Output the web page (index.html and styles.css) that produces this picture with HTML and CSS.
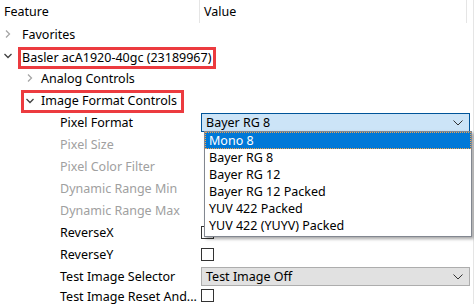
FILE: index.html
```html
<!DOCTYPE html>
<html lang="en">
<head>
    <meta charset="UTF-8">
    <title>Features</title>
    <link rel="stylesheet" href="styles.css">
</head>
<body>
    <div class="tree">
        <!-- header -->
        <div class="head">
            <div class="name">Feature</div>
            <div class="value">Value</div>
        </div>

        <div class="row">
            <div class="name lv0">
                <svg class="arrow closed" width="10" height="10" viewBox="0 0 10 10"><path d="M3 1.5 L6.5 5 L3 8.5" fill="none" stroke="currentColor" stroke-width="1.3"/></svg>
                <span>Favorites</span>
            </div>
            <div class="value"></div>
        </div>
        <div class="row">
            <div class="name lv0">
                <svg class="arrow open" width="10" height="10" viewBox="0 0 10 10"><path d="M1.5 3 L5 6.5 L8.5 3" fill="none" stroke="currentColor" stroke-width="1.3"/></svg>
                <span class="mark cam">Basler acA1920-40gc (23189967)</span>
            </div>
            <div class="value"></div>
        </div>
        <div class="row">
            <div class="name lv1">
                <svg class="arrow closed" width="10" height="10" viewBox="0 0 10 10"><path d="M3 1.5 L6.5 5 L3 8.5" fill="none" stroke="currentColor" stroke-width="1.3"/></svg>
                <span>Analog Controls</span>
            </div>
            <div class="value"></div>
        </div>
        <div class="row">
            <div class="name lv1 marked">
                <span class="mark grp">
                    <svg class="arrow open" width="10" height="10" viewBox="0 0 10 10"><path d="M1.5 3 L5 6.5 L8.5 3" fill="none" stroke="currentColor" stroke-width="1.3"/></svg>
                    <span>Image Format Controls</span>
                </span>
            </div>
            <div class="value"></div>
        </div>
        <div class="row">
            <div class="name lv2">Pixel Format</div>
            <div class="value">
                <div class="select active">
                    <span>Bayer RG 8</span>
                    <svg width="10" height="6" viewBox="0 0 10 6"><path d="M0.5 0.5 L5 5 L9.5 0.5" fill="none" stroke="#333" stroke-width="1"/></svg>
                </div>
            </div>
        </div>
        <div class="row">
            <div class="name lv2 off">Pixel Size</div>
            <div class="value"></div>
        </div>
        <div class="row">
            <div class="name lv2 off">Pixel Color Filter</div>
            <div class="value"></div>
        </div>
        <div class="row">
            <div class="name lv2 off">Dynamic Range Min</div>
            <div class="value"></div>
        </div>
        <div class="row">
            <div class="name lv2 off">Dynamic Range Max</div>
            <div class="value"></div>
        </div>
        <div class="row">
            <div class="name lv2">ReverseX</div>
            <div class="value"><div class="check"></div></div>
        </div>
        <div class="row">
            <div class="name lv2">ReverseY</div>
            <div class="value"><div class="check"></div></div>
        </div>
        <div class="row">
            <div class="name lv2">Test Image Selector</div>
            <div class="value">
                <div class="select">
                    <span>Test Image Off</span>
                    <svg width="10" height="6" viewBox="0 0 10 6"><path d="M0.5 0.5 L5 5 L9.5 0.5" fill="none" stroke="#333" stroke-width="1"/></svg>
                </div>
            </div>
        </div>
        <div class="row last">
            <div class="name lv2">Test Image Reset And...</div>
            <div class="value"><div class="check"></div></div>
        </div>

        <!-- open dropdown of Pixel Format -->
        <ul class="popup">
            <li class="sel">Mono 8</li>
            <li>Bayer RG 8</li>
            <li>Bayer RG 12</li>
            <li>Bayer RG 12 Packed</li>
            <li>YUV 422 Packed</li>
            <li>YUV 422 (YUYV) Packed</li>
        </ul>
    </div>
</body>
</html>
```

FILE: styles.css
```css
* {
    margin: 0;
    padding: 0;
    box-sizing: border-box;
}
body {
    background: white;
    font-family: "Noto Sans", "Liberation Sans", sans-serif;
    font-size: 12.5px;
    color: #000;
    overflow: hidden;
}
.tree {
    position: relative;
    width: 474px;
    height: 304px;
    border-right: 1px solid #e5e5e5;
}
.head, .row {
    display: flex;
    align-items: center;
}
.head {
    height: 23px;
}
.head .name {
    width: 200px;
    padding-left: 4px;
    border-right: 1px solid #e5e5e5;
    height: 23px;
    line-height: 23px;
}
.head .value {
    padding-left: 4px;
    flex: 1;
    height: 23px;
    line-height: 23px;
    margin-right: 6px;
    border-right: 1px solid #e5e5e5;
}
.row {
    height: 22px;
}
.row.last {
    height: 20px;
    align-items: flex-start;
    padding-top: 2px;
}
.row.last .name { line-height: 16px; }
.name {
    width: 200px;
    flex: none;
    display: flex;
    align-items: center;
    white-space: nowrap;
}
.value {
    flex: 1;
    display: flex;
    align-items: center;
    padding-left: 1px;
    padding-right: 3px;
}
.lv0 { padding-left: 3px; }
.lv1 { padding-left: 25px; }
.lv2 { padding-left: 60px; }
.off { color: #a0a0a0; }
.arrow {
    flex: none;
    margin-right: 9px;
}
.arrow.closed { color: #a6a6a6; }
.arrow.open { color: #404040; }
.lv1 .arrow { margin-right: 6px; }
/* red highlight boxes */
.mark {
    outline: 3px solid #ec3b3f;
    line-height: 16px;
}
.mark.cam {
    margin-top: 4px;
    padding: 0 2px 0 1px;
    margin-left: -1px;
}
.marked { padding-left: 24px; }
.mark.grp {
    display: flex;
    align-items: center;
    margin-top: 2px;
    height: 17px;
    padding: 0 4px 0 1px;
}
/* combo boxes */
.select {
    flex: 1;
    height: 19px;
    border: 1px solid #adadad;
    background: #e1e1e1;
    display: flex;
    align-items: center;
    justify-content: space-between;
    padding: 0 6px 0 4px;
    margin-top: 1px;
}
.select.active {
    background: #cce4f7;
    border-color: #005499;
}
.check {
    width: 13px;
    height: 13px;
    border: 1px solid #333;
    background: white;
}
.popup {
    position: absolute;
    left: 204px;
    top: 131px;
    width: 268px;
    list-style: none;
    background: white;
    border: 1px solid #828790;
    padding: 0 0 2px;
    box-shadow: 2px 2px 3px rgba(0, 0, 0, 0.35);
}
.popup li {
    height: 17px;
    line-height: 17px;
    padding-left: 4px;
}
.popup li.sel {
    background: #0078d7;
    color: white;
    outline: 1px dotted #f5a34a;
    outline-offset: -1px;
}
```
